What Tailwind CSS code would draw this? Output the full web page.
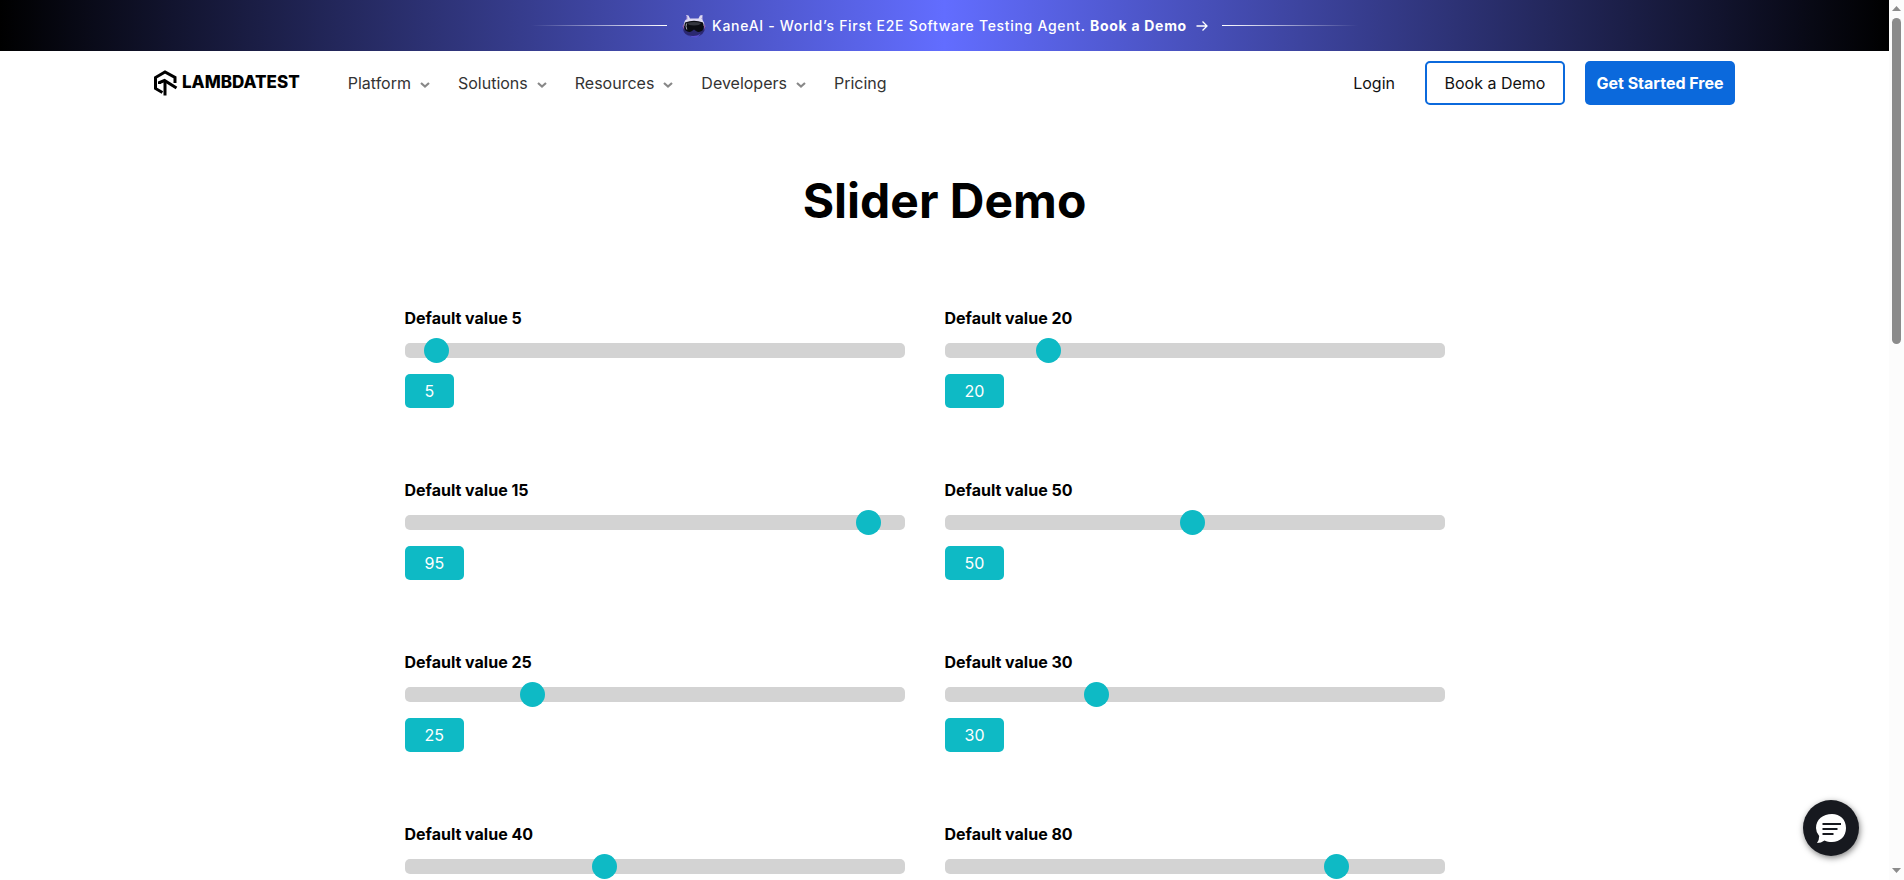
<!DOCTYPE html>
<html lang="en">
<head>
<meta charset="utf-8">
<meta name="viewport" content="width=device-width, initial-scale=1">
<title>Slider Demo</title>
<script src="https://cdn.jsdelivr.net/npm/@tailwindcss/browser@4"></script>
</head>
<body class="flex h-screen overflow-hidden bg-white font-['Inter',sans-serif] text-base text-black">
<div class="min-w-0 flex-1 overflow-y-auto [scrollbar-width:none]">

  <a href="#kane" class="flex h-[51px] items-center justify-center bg-linear-to-r/srgb from-black via-[#626dff] to-black text-sm font-medium tracking-wider text-white">
    <span class="h-px w-[136px] bg-linear-to-r from-transparent to-white"></span>
    <svg class="ml-[15px] h-6 w-6" viewBox="0 0 24 24" aria-hidden="true">
      <path d="M1 11q-1 8 5 10.500 6 2.500 12 0 6-3.500 5-10.500z" fill="#2b2870"/>
      <path d="M5 20.500q7 3.500 14-1l-4 4q-5 .5-10-3z" fill="#5a4fd0"/>
      <path d="M2 12q-.5-4 2-6.500L4 1l2.500.5 1.500 3h8.500l1.500-3L20.500 1v5q2 2 1.500 6z" fill="#dedaf2"/>
      <path d="M4 5.500V1l1.300 1.500v3zM20.500 5V2l-1 3z" fill="#7c6fc9"/>
      <path d="M3 8.500Q12 4.800 21 8.500q1.500 4.500-.5 8-3.500 2.500-6.500.5l-2-1.500-2 1.500q-3 2-6.500-.5-2-3.500-.5-8z" fill="#0b0c12"/>
      <path d="M5 9q7-2 14 0-1 2.500-7 2.500T5 9z" fill="#34363e"/>
      <path d="M4.500 9.500q-1 3 .3 6" stroke="#c9cad6" stroke-width=".8" fill="none"/>
      <path d="M.5 12l1.500-2v6zM23.500 12L22 10v6z" fill="#e08ad0" opacity=".6"/>
    </svg>
    <span class="ml-[6px] whitespace-nowrap">KaneAI - World’s First E2E Software Testing Agent. <b class="font-bold">Book a Demo</b></span>
    <svg class="ml-[9px] h-3 w-3" viewBox="0 0 12 12" fill="none" stroke="#fff" stroke-width="1.300" aria-hidden="true"><path d="M.5 6h10.500M6.500 1.500L11 6l-4.500 4.500"/></svg>
    <span class="ml-[14px] h-px w-[136px] bg-linear-to-r from-white to-transparent"></span>
  </a>

  <header class="flex h-16 items-center px-[154px]">
    <a href="#home" class="flex items-center gap-1 text-[17px] font-extrabold" aria-label="LambdaTest">
      <svg class="h-[26px] w-6" viewBox="0 0 24 26" fill="none" stroke="#000" stroke-width="3" aria-hidden="true">
        <path d="M8.400 22.500L1.500 18.500V7.500L11 2L21 7.500V13"/>
        <path d="M5.500 14V12.500L10.500 10.500L22.500 18"/>
        <path d="M11 11V25.500"/>
      </svg>
      <span>LAMBDATEST</span>
    </a>
    <nav class="ml-12 flex items-center gap-7 text-[#333]">
      <button type="button" class="flex items-center gap-[9px]">Platform <svg class="mt-1 h-2 w-[10px]" viewBox="0 0 10 8" fill="none" stroke="#888" stroke-width="2.200" aria-hidden="true"><path d="M1 2L5 5.500L9 2"/></svg></button>
      <button type="button" class="flex items-center gap-[9px]">Solutions <svg class="mt-1 h-2 w-[10px]" viewBox="0 0 10 8" fill="none" stroke="#888" stroke-width="2.200" aria-hidden="true"><path d="M1 2L5 5.500L9 2"/></svg></button>
      <button type="button" class="flex items-center gap-[9px]">Resources <svg class="mt-1 h-2 w-[10px]" viewBox="0 0 10 8" fill="none" stroke="#888" stroke-width="2.200" aria-hidden="true"><path d="M1 2L5 5.500L9 2"/></svg></button>
      <button type="button" class="flex items-center gap-[9px]">Developers <svg class="mt-1 h-2 w-[10px]" viewBox="0 0 10 8" fill="none" stroke="#888" stroke-width="2.200" aria-hidden="true"><path d="M1 2L5 5.500L9 2"/></svg></button>
      <a href="#pricing">Pricing</a>
    </nav>
    <div class="ml-auto flex items-center whitespace-nowrap text-[#111]">
      <a href="#login" class="mr-[30px]">Login</a>
      <button type="button" class="mr-5 h-11 w-[140px] rounded-[5px] border-2 border-[#0b69dc]">Book a Demo</button>
      <button type="button" class="h-11 w-[150px] rounded-[5px] bg-[#0b69dc] font-bold text-white">Get Started Free</button>
    </div>
  </header>

  <main>
    <h1 class="mt-[53px] text-center text-5xl leading-[66px] font-bold">Slider Demo</h1>
    <div id="sliders" class="mx-auto mt-[72px] grid max-w-[1080px] grid-cols-2 gap-y-[70px]"></div>
  </main>
</div>

<button type="button" aria-label="Open chat" class="fixed right-[45px] bottom-6 flex h-14 w-14 items-center justify-center rounded-full bg-[#17191f] shadow-[1px_2px_6px_rgba(0,0,0,0.5)]">
  <svg class="h-8 w-8" viewBox="0 0 32 32" aria-hidden="true">
    <path d="M17 2C25 2 31 7.500 31 16S25 30 17 30C14 30 12 29.600 9.500 28.500Q6 31 2 31Q4.300 27.500 4.200 24Q1 20.500 1 16C1 7.500 8 2 17 2Z" fill="#fff"/>
    <path d="M7.500 12h18.500M7.500 17h15M7.500 22h11" stroke="#17191f" stroke-width="1.800" fill="none"/>
  </svg>
</button>

<div aria-hidden="true" class="flex w-[15px] shrink-0 flex-col items-center bg-[#fcfcfc]">
  <svg class="mt-[6px] h-[5px] w-[9px]" viewBox="0 0 9 5"><path d="M0 5L4.500 0L9 5z" fill="#8b8b8b"/></svg>
  <div class="mt-[7px] h-[326px] w-[9px] rounded-full bg-[#8b8b8b]"></div>
  <svg class="mt-auto mb-[7px] h-[5px] w-[9px]" viewBox="0 0 9 5"><path d="M0 0L4.500 5L9 0z" fill="#8b8b8b"/></svg>
</div>

<template id="slider">
  <div class="pr-10">
    <label class="block leading-6 font-bold"></label>
    <input type="range" min="1" max="100" class="mt-[13px] block h-[15px] w-full appearance-none rounded-[5px] bg-[#d3d3d3] outline-none [&::-webkit-slider-thumb]:h-[25px] [&::-webkit-slider-thumb]:w-[25px] [&::-webkit-slider-thumb]:appearance-none [&::-webkit-slider-thumb]:rounded-full [&::-webkit-slider-thumb]:bg-[#0ebac5]">
    <output class="mt-4 block h-[34px] w-fit rounded-[5px] bg-[#0ebac5] px-5 leading-[34px] text-white"></output>
  </div>
</template>
<script>
  const sliders = [[5, 5], [20, 20], [15, 95], [50, 50], [25, 25], [30, 30], [40, 40], [80, 80]];
  const grid = document.getElementById('sliders');
  for (const [initial, value] of sliders) {
    const item = document.getElementById('slider').content.cloneNode(true);
    const label = item.querySelector('label');
    const input = item.querySelector('input');
    const output = item.querySelector('output');
    input.id = 'range' + initial;
    label.htmlFor = input.id;
    label.textContent = 'Default value ' + initial;
    input.value = value;
    output.textContent = value;
    input.addEventListener('input', () => { output.textContent = input.value; });
    grid.append(item);
  }
</script>
</body>
</html>
